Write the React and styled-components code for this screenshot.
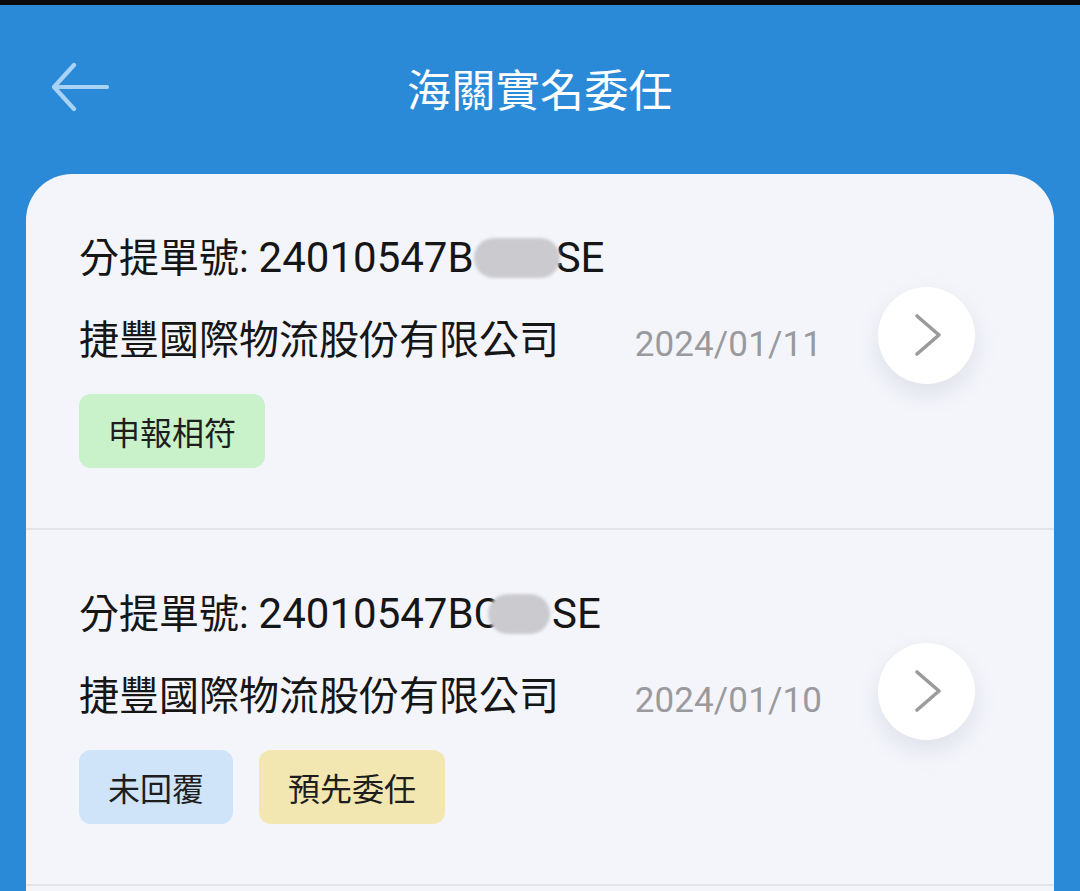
import React from "react";
import styled, { createGlobalStyle } from "styled-components";

const Global = createGlobalStyle`
  html, body { margin: 0; padding: 0; }
  body {
    background: #2b8ad8;
    font-family: Roboto, "Noto Sans CJK TC", "Noto Sans", sans-serif;
    overflow: hidden;
  }
`;

const Page = styled.div`
  width: 1080px;
  height: 891px;
  display: flex;
  flex-direction: column;
  background: #2b8ad8;
  overflow: hidden;
`;

const StatusStrip = styled.div`
  height: 5px;
  background: #0b0b0b;
  flex: none;
`;

const Header = styled.header`
  height: 169px;
  flex: none;
  display: grid;
  grid-template-columns: 1fr auto 1fr;
  align-items: center;
  padding: 0 52px;
  box-sizing: border-box;
`;

const BackButton = styled.button`
  justify-self: start;
  background: none;
  border: 0;
  padding: 0;
  margin-top: -6px;
  width: 58px;
  height: 50px;
  display: flex;
  align-items: center;
  cursor: pointer;
`;

const Title = styled.h1`
  margin: -4px 0 0;
  font-size: 44px;
  font-weight: 400;
  color: #ffffff;
  letter-spacing: 0.3px;
`;

const Card = styled.main`
  flex: 1;
  margin: 0 26px;
  background: #f4f5fa;
  border-radius: 46px 46px 0 0;
  overflow: hidden;
`;

const Row = styled.section`
  display: flex;
  align-items: flex-start;
  padding: 59px 79px 60px 53px;
  border-bottom: 2px solid #e3e4ea;
`;

const Info = styled.div`
  flex: 1;
  display: flex;
  flex-direction: column;
  min-width: 0;
`;

const Line = styled.div`
  font-size: 40px;
  line-height: 50px;
  color: #161616;
  white-space: nowrap;
  margin-top: ${(p) => p.$gap || 0}px;
`;

const Code = styled.span`
  font-size: 42px;
`;

const Masked = styled.span`
  display: inline-block;
  vertical-align: middle;
  width: ${(p) => p.$w}px;
  height: 40px;
  margin: -6px ${(p) => p.$mr}px 0 ${(p) => p.$ml}px;
  border-radius: 20px;
  background: #cbcbcf;
  filter: blur(1.5px);
  position: relative;
`;

const Tags = styled.div`
  display: flex;
  gap: 26px;
  margin-top: 28px;
`;

const Tag = styled.span`
  height: 74px;
  padding: 0 29px 0 29px;
  display: inline-flex;
  align-items: center;
  border-radius: 12px;
  font-size: 32px;
  color: #1e1e1e;
  background: ${(p) =>
    p.$tone === "green" ? "#c9f2cb" : p.$tone === "blue" ? "#cfe4f8" : "#f3e7b1"};
`;

const Side = styled.div`
  display: flex;
  align-items: center;
  gap: 56px;
  margin-top: 54px;
`;

const DateText = styled.span`
  font-size: 35px;
  color: #9a9a9e;
  padding-top: 18px;
  letter-spacing: 0.1px;
`;

const NextButton = styled.button`
  width: 97px;
  height: 97px;
  border-radius: 50%;
  border: 0;
  background: #ffffff;
  box-shadow: 0 10px 22px rgba(110, 125, 160, 0.16);
  display: flex;
  align-items: center;
  justify-content: center;
  padding: 0;
  cursor: pointer;
`;

const BackIcon = () => (
  <svg width="58" height="50" viewBox="0 0 58 50" fill="none">
    <path
      d="M55 25H3M22 3L2 25L22 47"
      stroke="#a9d3f6"
      strokeWidth="4.2"
      strokeLinecap="round"
      strokeLinejoin="round"
    />
  </svg>
);

const Chevron = () => (
  <svg width="30" height="46" viewBox="0 0 30 46" fill="none">
    <path
      d="M5 3L27 22L5 41"
      stroke="#9b9b9b"
      strokeWidth="3.6"
      strokeLinecap="round"
      strokeLinejoin="round"
    />
  </svg>
);

const items = [
  {
    pre: "24010547B",
    mask: { w: 86, ml: 0, mr: -4 },
    post: "SE",
    date: "2024/01/11",
    tags: [{ t: "申報相符", tone: "green" }],
  },
  {
    pre: "24010547BC",
    mask: { w: 62, ml: -13, mr: 2 },
    post: "SE",
    date: "2024/01/10",
    tags: [
      { t: "未回覆", tone: "blue" },
      { t: "預先委任", tone: "yellow" },
    ],
  },
];

export default function App() {
  return (
    <Page>
      <Global />
      <StatusStrip />
      <Header>
        <BackButton aria-label="返回">
          <BackIcon />
        </BackButton>
        <Title>海關實名委任</Title>
        <span />
      </Header>
      <Card>
        {items.map((it, i) => (
          <Row key={i}>
            <Info>
              <Line>
                分提單號: <Code>{it.pre}</Code>
                <Masked $w={it.mask.w} $ml={it.mask.ml} $mr={it.mask.mr} />
                <Code>{it.post}</Code>
              </Line>
              <Line $gap={32}>捷豐國際物流股份有限公司</Line>
              <Tags>
                {it.tags.map((tg) => (
                  <Tag key={tg.t} $tone={tg.tone}>
                    {tg.t}
                  </Tag>
                ))}
              </Tags>
            </Info>
            <Side>
              <DateText>{it.date}</DateText>
              <NextButton aria-label="查看">
                <Chevron />
              </NextButton>
            </Side>
          </Row>
        ))}
      </Card>
    </Page>
  );
}
